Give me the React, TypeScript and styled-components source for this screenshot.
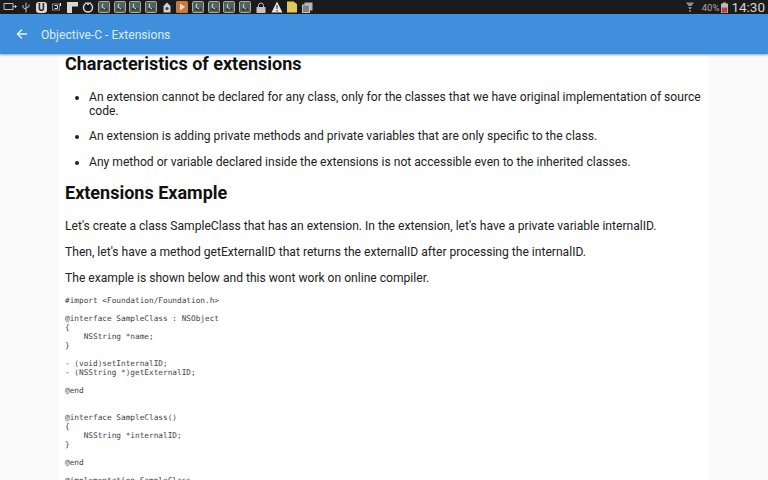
import React from 'react'
import styled, { createGlobalStyle } from 'styled-components'

const GlobalStyle = createGlobalStyle`
    html, body {
        margin: 0;
        padding: 0;
        background: #fafafa;
        overflow: hidden;
    }
`

const codeSample = `#import <Foundation/Foundation.h>

@interface SampleClass : NSObject
{
    NSString *name;
}

- (void)setInternalID;
- (NSString *)getExternalID;

@end


@interface SampleClass()
{
    NSString *internalID;
}

@end

@implementation SampleClass`

const bullets = [
    'An extension cannot be declared for any class, only for the classes that we have original implementation of source code.',
    'An extension is adding private methods and private variables that are only specific to the class.',
    'Any method or variable declared inside the extensions is not accessible even to the inherited classes.',
]

const paragraphs = [
    "Let's create a class SampleClass that has an extension. In the extension, let's have a private variable internalID.",
    "Then, let's have a method getExternalID that returns the externalID after processing the internalID.",
    'The example is shown below and this wont work on online compiler.',
]

const ThumbIcon = () => (
    <svg width="12" height="12" viewBox="0 0 12 12">
        <rect x="0.5" y="0.5" width="11" height="11" rx="1" fill="#56605a" stroke="#a3aca6" />
        <path d="M2 9.5 L4.5 6 L7 8 L8.5 6.5 L10 9.5 Z" fill="#2c4a30" />
        <path d="M5 2.5 L4 6 L7 8" fill="none" stroke="#d5ddd6" strokeWidth="1" />
    </svg>
)

const App: React.FC = () => {
    return (
        <Screen>
            <GlobalStyle />
            <StatusBar>
                <StatusIcons>
                    <svg width="14" height="10" viewBox="0 0 14 10">
                        <path d="M1 1.5 H10 V7.5 H1 Z M10 4.5 H13.5 M12 3 L13.5 4.5 L12 6" fill="none" stroke="#c0c0c0" />
                    </svg>
                    <svg width="8" height="11" viewBox="0 0 8 11">
                        <path d="M4 0.5 V10.5 M1 3 V5.5 L4 7.5 M7 2.5 V4.5 L4 6.5" fill="none" stroke="#c0c0c0" />
                    </svg>
                    <UBadge>U</UBadge>
                    <svg width="10" height="10" viewBox="0 0 10 10">
                        <rect x="0.5" y="2" width="7" height="6" fill="none" stroke="#888" />
                        <path d="M2.5 3.5 H5.5 V6.5 H2.5 M8.5 1 V4" fill="none" stroke="#ddd" />
                    </svg>
                    <svg width="11" height="11" viewBox="0 0 11 11">
                        <path d="M0 0 H11 V4.5 H5 V11 H0 Z" fill="#d8d8d4" />
                    </svg>
                    <svg width="12" height="12" viewBox="0 0 12 12">
                        <circle cx="6" cy="6.5" r="4.5" fill="none" stroke="#d5d5d5" strokeWidth="1.5" />
                        <path d="M3.5 1.5 L6 4 L8.5 1.5" fill="none" stroke="#d5d5d5" />
                    </svg>
                    <ThumbIcon />
                    <ThumbIcon />
                    <ThumbIcon />
                    <ThumbIcon />
                    <svg width="8" height="11" viewBox="0 0 8 11">
                        <path d="M0.5 4 L4 0.5 L7.5 4 V10.5 H0.5 Z" fill="#d0d0d0" />
                        <circle cx="4" cy="6.5" r="1.6" fill="#444" />
                    </svg>
                    <svg width="12" height="12" viewBox="0 0 12 12">
                        <rect width="12" height="12" rx="1.5" fill="#c67a3e" />
                        <path d="M4 2.5 L9 6 L4 9.5 Z" fill="#f0dcc8" />
                    </svg>
                    <ThumbIcon />
                    <ThumbIcon />
                    <ThumbIcon />
                    <ThumbIcon />
                    <svg width="10" height="11" viewBox="0 0 10 11">
                        <path d="M2.5 5 V3.5 A2.5 2.5 0 0 1 7.5 3.5 V5" fill="none" stroke="#c4c4c4" />
                        <rect x="0.5" y="5" width="9" height="6" fill="#c4c4c4" />
                    </svg>
                    <svg width="12" height="12" viewBox="0 0 12 12">
                        <path d="M6 0.5 L11.5 11.5 H0.5 Z" fill="#e6e6e6" />
                        <path d="M6 4 V8 M6 9 V10.5" stroke="#222" />
                    </svg>
                    <svg width="10" height="12" viewBox="0 0 10 12">
                        <path d="M0 0.5 H6.5 L10 3 V11.5 H0 Z" fill="#e2c957" />
                    </svg>
                    <svg width="11" height="11" viewBox="0 0 11 11">
                        <rect x="2.5" y="0.5" width="8" height="8" fill="#b5b5b5" />
                        <rect x="0.5" y="3" width="7" height="7.5" fill="#808080" stroke="#c4c4c4" />
                    </svg>
                </StatusIcons>
                <StatusRight>
                    <svg width="8" height="12" viewBox="0 0 8 12">
                        <path d="M0 1.5 H8 L5.5 5 H2.5 Z M2.5 6 H5.5 L5 8 H3 Z M3 9 H5 L4.5 11 H3.5 Z" fill="#8d8d8d" />
                    </svg>
                    <BatteryLabel>40%</BatteryLabel>
                    <svg width="7" height="11" viewBox="0 0 7 11">
                        <path d="M2 0.5 H5 V1.5 H7 V11 H0 V1.5 H2 Z" fill="#bbb" />
                        <rect x="0.8" y="5.5" width="5.4" height="5" fill="#b8453c" />
                    </svg>
                    <Clock>14:30</Clock>
                </StatusRight>
            </StatusBar>
            <AppBar>
                <svg width="12" height="12" viewBox="0 0 12 12">
                    <path d="M11 6 H1.5 M6 1.5 L1.5 6 L6 10.5" fill="none" stroke="#e6f0fb" strokeWidth="1.5" />
                </svg>
                <AppTitle>Objective-C - Extensions</AppTitle>
            </AppBar>
            <Column>
                <Heading>Characteristics of extensions</Heading>
                <BulletList>
                    {bullets.map((item, i) => (
                        <li key={i}>{item}</li>
                    ))}
                </BulletList>
                <Heading>Extensions Example</Heading>
                <ParagraphGroup>
                    {paragraphs.map((item, i) => (
                        <Paragraph key={i}>{item}</Paragraph>
                    ))}
                </ParagraphGroup>
                <Code>{codeSample}</Code>
            </Column>
        </Screen>
    )
}

export default App

const Screen = styled.div`
    width: 768px;
    height: 480px;
    overflow: hidden;
    background: #fafafa;
    font-family: Roboto, "Liberation Sans", sans-serif;
`

const StatusBar = styled.div`
    height: 14px;
    background: #1b1b1b;
    display: flex;
    align-items: center;
    justify-content: space-between;
    padding: 0 3px 0 2px;
`

const StatusIcons = styled.div`
    display: grid;
    grid-template-columns: repeat(20, 15.7px);
    align-items: center;
    justify-items: center;
`

const UBadge = styled.div`
    width: 11px;
    height: 11px;
    border-radius: 3px;
    background: #d8d8d8;
    color: #222;
    font-size: 10px;
    font-weight: 700;
    line-height: 11px;
    text-align: center;
`

const StatusRight = styled.div`
    display: flex;
    align-items: center;
`

const BatteryLabel = styled.span`
    margin: 0 2px 0 8px;
    color: #a8a8a8;
    font-size: 9.5px;
`

const Clock = styled.span`
    margin-left: 3px;
    color: #d5d5d5;
    font-size: 13.5px;
`

const AppBar = styled.div`
    height: 40px;
    background: #3f8fdd;
    box-shadow: 0 1px 2px rgba(40, 80, 130, 0.5);
    display: flex;
    align-items: center;
    gap: 13px;
    padding-left: 16px;
    position: relative;
`

const AppTitle = styled.div`
    color: #dcebfa;
    font-size: 12.1px;
    padding-top: 1px;
`

const Column = styled.div`
    width: 649px;
    height: 426px;
    margin-left: 59px;
    padding: 0 6px;
    box-sizing: border-box;
    background: #ffffff;
    color: #222;
`

const Heading = styled.h2`
    margin: 0 0 16.5px;
    font-size: 18px;
    line-height: 19px;
    font-weight: 700;
    color: #111;
`

const BulletList = styled.ul`
    margin: 0 0 14px;
    padding-left: 24px;
    font-size: 12.1px;
    line-height: 14px;

    li {
        margin-bottom: 11.5px;
    }
`

const ParagraphGroup = styled.div`
    padding-top: 1px;
`

const Paragraph = styled.p`
    margin: 0 0 11px;
    font-size: 12.1px;
    line-height: 15px;
`

const Code = styled.pre`
    margin: -1px 0 0;
    font-family: "DejaVu Sans Mono", monospace;
    font-size: 7.75px;
    line-height: 9px;
    color: #444;
`
